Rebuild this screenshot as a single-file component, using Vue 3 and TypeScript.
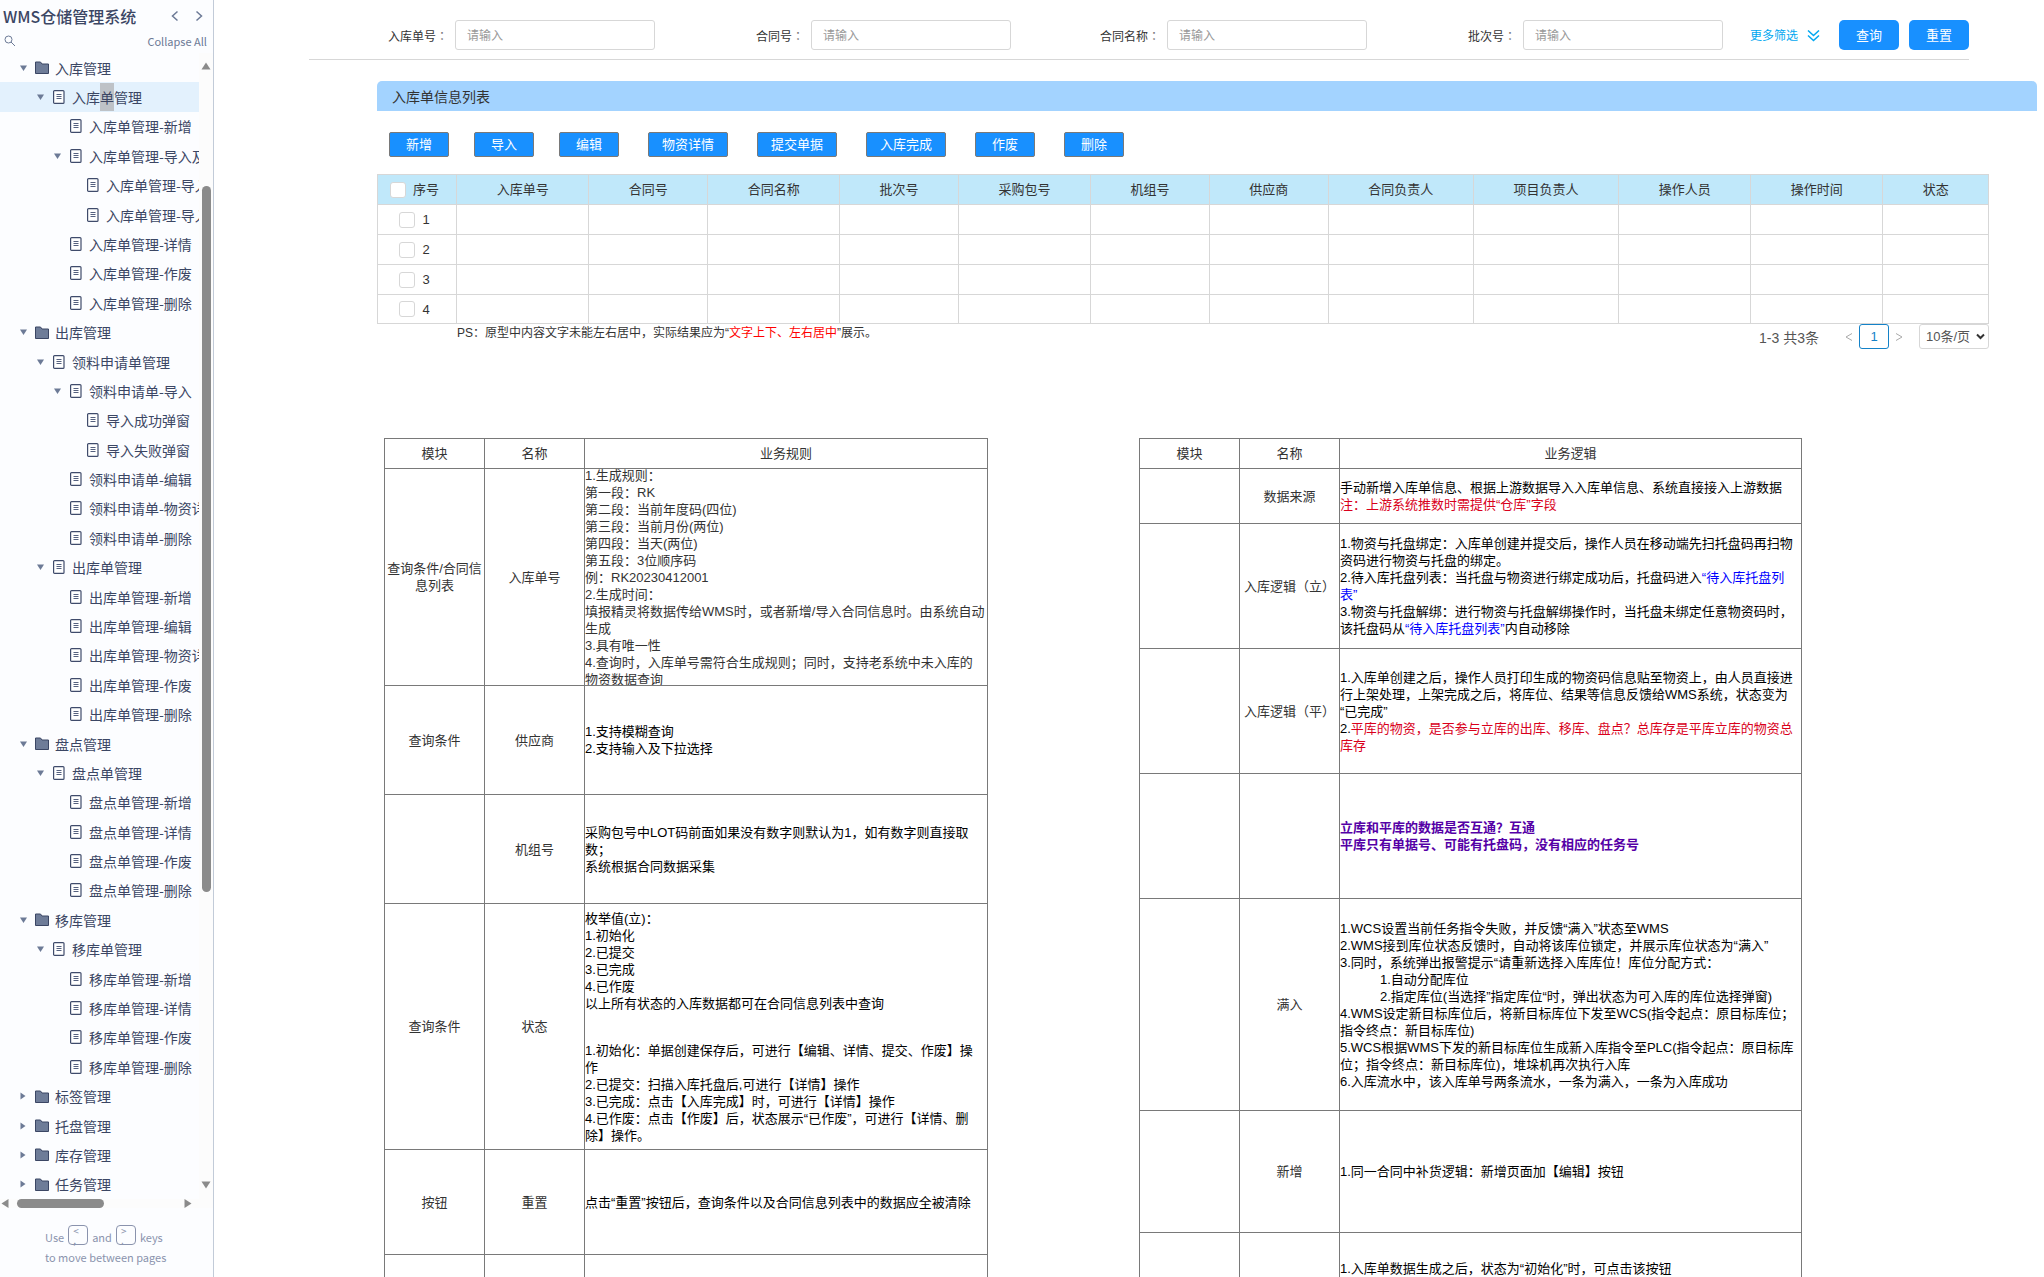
<script setup lang="ts">
import { ref } from 'vue'

interface TreeNode {
  label: string
  level: number
  open?: boolean
  folder?: boolean
}

interface Run {
  text: string
  tone?: 'red' | 'blue' | 'violet'
}

interface Para {
  runs: Run[]
  indent?: boolean
  gapBefore?: boolean
}

interface RuleRow {
  module: string
  name: string
  height: number
  paras: Para[]
  soft?: boolean
}

const p = (text: string, tone?: Run['tone']): Para => ({ runs: [{ text, tone }] })

const tree: TreeNode[] = [
  { label: '入库管理', level: 0, open: true, folder: true },
  { label: '入库单管理', level: 1, open: true },
  { label: '入库单管理-新增', level: 2 },
  { label: '入库单管理-导入及', level: 2, open: true },
  { label: '入库单管理-导入', level: 3 },
  { label: '入库单管理-导入', level: 3 },
  { label: '入库单管理-详情', level: 2 },
  { label: '入库单管理-作废', level: 2 },
  { label: '入库单管理-删除', level: 2 },
  { label: '出库管理', level: 0, open: true, folder: true },
  { label: '领料申请单管理', level: 1, open: true },
  { label: '领料申请单-导入', level: 2, open: true },
  { label: '导入成功弹窗', level: 3 },
  { label: '导入失败弹窗', level: 3 },
  { label: '领料申请单-编辑', level: 2 },
  { label: '领料申请单-物资详', level: 2 },
  { label: '领料申请单-删除', level: 2 },
  { label: '出库单管理', level: 1, open: true },
  { label: '出库单管理-新增', level: 2 },
  { label: '出库单管理-编辑', level: 2 },
  { label: '出库单管理-物资详', level: 2 },
  { label: '出库单管理-作废', level: 2 },
  { label: '出库单管理-删除', level: 2 },
  { label: '盘点管理', level: 0, open: true, folder: true },
  { label: '盘点单管理', level: 1, open: true },
  { label: '盘点单管理-新增', level: 2 },
  { label: '盘点单管理-详情', level: 2 },
  { label: '盘点单管理-作废', level: 2 },
  { label: '盘点单管理-删除', level: 2 },
  { label: '移库管理', level: 0, open: true, folder: true },
  { label: '移库单管理', level: 1, open: true },
  { label: '移库单管理-新增', level: 2 },
  { label: '移库单管理-详情', level: 2 },
  { label: '移库单管理-作废', level: 2 },
  { label: '移库单管理-删除', level: 2 },
  { label: '标签管理', level: 0, open: false, folder: true },
  { label: '托盘管理', level: 0, open: false, folder: true },
  { label: '库存管理', level: 0, open: false, folder: true },
  { label: '任务管理', level: 0, open: false, folder: true },
]
const current = 1

const filters = ['入库单号', '合同号', '合同名称', '批次号']
const actions = ['新增', '导入', '编辑', '物资详情', '提交单据', '入库完成', '作废', '删除']

const columns = [
  { title: '入库单号', units: 100 },
  { title: '合同号', units: 90 },
  { title: '合同名称', units: 100 },
  { title: '批次号', units: 90 },
  { title: '采购包号', units: 100 },
  { title: '机组号', units: 90 },
  { title: '供应商', units: 90 },
  { title: '合同负责人', units: 110 },
  { title: '项目负责人', units: 110 },
  { title: '操作人员', units: 100 },
  { title: '操作时间', units: 100 },
  { title: '状态', units: 80 },
]
const indexUnits = 60
const totalUnits = columns.reduce((sum, c) => sum + c.units, indexUnits)
const share = (units: number) => `${(units / totalUnits) * 100}%`

const pageSize = ref('10')

const rules: RuleRow[] = [
  {
    module: '查询条件/合同信息列表',
    name: '入库单号',
    height: 216,
    soft: true,
    paras: [
      p('1.生成规则：'),
      p('第一段：RK'),
      p('第二段：当前年度码(四位)'),
      p('第三段：当前月份(两位)'),
      p('第四段：当天(两位)'),
      p('第五段：3位顺序码'),
      p('例：RK20230412001'),
      p('2.生成时间：'),
      p('填报精灵将数据传给WMS时，或者新增/导入合同信息时。由系统自动生成'),
      p('3.具有唯一性'),
      p('4.查询时，入库单号需符合生成规则；同时，支持老系统中未入库的物资数据查询'),
    ],
  },
  {
    module: '查询条件',
    name: '供应商',
    height: 108,
    paras: [p('1.支持模糊查询'), p('2.支持输入及下拉选择')],
  },
  {
    module: '',
    name: '机组号',
    height: 108,
    paras: [
      p('采购包号中LOT码前面如果没有数字则默认为1，如有数字则直接取数；'),
      p('系统根据合同数据采集'),
    ],
  },
  {
    module: '查询条件',
    name: '状态',
    height: 245,
    paras: [
      p('枚举值(立)：'),
      p('1.初始化'),
      p('2.已提交'),
      p('3.已完成'),
      p('4.已作废'),
      p('以上所有状态的入库数据都可在合同信息列表中查询'),
      { runs: [{ text: '1.初始化：单据创建保存后，可进行【编辑、详情、提交、作废】操作' }], gapBefore: true },
      p('2.已提交：扫描入库托盘后,可进行【详情】操作'),
      p('3.已完成：点击【入库完成】时，可进行【详情】操作'),
      p('4.已作废：点击【作废】后，状态展示“已作废”，可进行【详情、删除】操作。'),
    ],
  },
  {
    module: '按钮',
    name: '重置',
    height: 104,
    paras: [p('点击“重置”按钮后，查询条件以及合同信息列表中的数据应全被清除')],
  },
  { module: '', name: '', height: 72, paras: [] },
]

const logic: RuleRow[] = [
  {
    module: '',
    name: '数据来源',
    height: 54,
    paras: [
      p('手动新增入库单信息、根据上游数据导入入库单信息、系统直接接入上游数据'),
      p('注：上游系统推数时需提供“仓库”字段', 'red'),
    ],
  },
  {
    module: '',
    name: '入库逻辑（立）',
    height: 124,
    paras: [
      p('1.物资与托盘绑定：入库单创建并提交后，操作人员在移动端先扫托盘码再扫物资码进行物资与托盘的绑定。'),
      {
        runs: [
          { text: '2.待入库托盘列表：当托盘与物资进行绑定成功后，托盘码进入' },
          { text: '“待入库托盘列表”', tone: 'blue' },
        ],
      },
      {
        runs: [
          { text: '3.物资与托盘解绑：进行物资与托盘解绑操作时，当托盘未绑定任意物资码时，该托盘码从' },
          { text: '“待入库托盘列表”', tone: 'blue' },
          { text: '内自动移除' },
        ],
      },
    ],
  },
  {
    module: '',
    name: '入库逻辑（平）',
    height: 124,
    paras: [
      p('1.入库单创建之后，操作人员打印生成的物资码信息贴至物资上，由人员直接进行上架处理，上架完成之后，将库位、结果等信息反馈给WMS系统，状态变为\u200b“已完成”'),
      {
        runs: [
          { text: '2.' },
          { text: '平库的物资，是否参与立库的出库、移库、盘点？总库存是平库立库的物资总库存', tone: 'red' },
        ],
      },
    ],
  },
  {
    module: '',
    name: '',
    height: 124,
    paras: [
      p('立库和平库的数据是否互通？互通', 'violet'),
      p('平库只有单据号、可能有托盘码，没有相应的任务号', 'violet'),
    ],
  },
  {
    module: '',
    name: '满入',
    height: 211,
    paras: [
      p('1.WCS设置当前任务指令失败，并反馈“满入”状态至WMS'),
      p('2.WMS接到库位状态反馈时，自动将该库位锁定，并展示库位状态为“满入”'),
      p('3.同时，系统弹出报警提示“请重新选择入库库位！库位分配方式：'),
      { runs: [{ text: '1.自动分配库位' }], indent: true },
      { runs: [{ text: '2.指定库位(当选择”指定库位“时，弹出状态为可入库的库位选择弹窗)' }], indent: true },
      p('4.WMS设定新目标库位后，将新目标库位下发至WCS(指令起点：原目标库位；指令终点：新目标库位)'),
      p('5.WCS根据WMS下发的新目标库位生成新入库指令至PLC(指令起点：原目标库位；指令终点：新目标库位)，堆垛机再次执行入库'),
      p('6.入库流水中，该入库单号两条流水，一条为满入，一条为入库成功'),
    ],
  },
  { module: '', name: '新增', height: 121, paras: [p('1.同一合同中补货逻辑：新增页面加【编辑】按钮')] },
  { module: '', name: '', height: 70, paras: [p('1.入库单数据生成之后，状态为“初始化”时，可点击该按钮')] },
]

const specs = [
  { key: 'rules', heading: '业务规则', rows: rules },
  { key: 'logic', heading: '业务逻辑', rows: logic },
]
</script>

<template>
  <div class="app">
    <aside class="sidebar">
      <header class="side-head">
        <div class="side-title">
          <h1>WMS仓储管理系统</h1>
          <button class="plain" type="button" aria-label="Previous page">
            <svg width="8" height="12" viewBox="0 0 8 12"><path d="M6.500 1.500 1.500 6l5 4.500" /></svg>
          </button>
          <button class="plain" type="button" aria-label="Next page">
            <svg width="8" height="12" viewBox="0 0 8 12"><path d="M1.500 1.500 6.500 6l-5 4.500" /></svg>
          </button>
        </div>
        <div class="side-tools">
          <button class="plain" type="button" aria-label="Search">
            <svg width="12" height="12" viewBox="0 0 12 12"><circle cx="4.500" cy="4.500" r="3.500" /><path d="m7 7 4 4" /></svg>
          </button>
          <button class="plain collapse" type="button">Collapse All</button>
        </div>
      </header>

      <div class="side-body">
        <ul class="tree">
          <li
            v-for="(node, i) in tree"
            :key="i"
            :class="['node', 'level-' + node.level, { current: i === current }]"
          >
            <span class="caret">
              <svg v-if="node.open === true" width="7" height="6" viewBox="0 0 7 6"><path d="M0 0.500h7L3.500 6z" /></svg>
              <svg v-else-if="node.open === false" width="6" height="8" viewBox="0 0 6 8"><path d="M0.500 0.500v7L5.500 4z" /></svg>
            </span>
            <svg v-if="node.folder" class="folder" width="14" height="13" viewBox="0 0 14 13">
              <path d="M0.500 1h5l1.500 2h6.500v9.500h-13z" />
            </svg>
            <svg v-else class="sheet" width="12" height="14" viewBox="0 0 12 14">
              <rect x="0.600" y="0.600" width="10.400" height="12.800" rx="1" />
              <path d="M3.500 4.500h5M3.500 6.500h5M3.500 8.500h5" />
            </svg>
            <a v-if="i === current" href="#">入库<span class="picked">单</span>管理</a>
            <a v-else href="#">{{ node.label }}</a>
          </li>
        </ul>
        <div class="vbar">
          <svg width="10" height="8" viewBox="0 0 10 8"><path d="M5 0.500 9.500 7.500h-9z" /></svg>
          <div class="vtrack"><i class="vthumb"></i></div>
          <svg width="10" height="8" viewBox="0 0 10 8"><path d="M5 7.500 0.500 0.500h9z" /></svg>
        </div>
      </div>
      <div class="hbar">
        <svg width="8" height="9" viewBox="0 0 8 9"><path d="M0.500 4.500 7.500 0v9z" /></svg>
        <div class="htrack"><i class="hthumb"></i></div>
        <svg width="8" height="9" viewBox="0 0 8 9"><path d="M7.500 4.500 0.500 0v9z" /></svg>
      </div>

      <footer class="side-foot">
        <div class="keys">
          <span>Use</span><kbd><span>&lt;</span><span>,</span></kbd>
          <span>and</span><kbd><span>&gt;</span><span>.</span></kbd>
          <span>keys</span>
        </div>
        <div>to move between pages</div>
      </footer>
    </aside>

    <main class="main">
      <form class="filters" @submit.prevent>
        <div v-for="(f, i) in filters" :key="f" class="field">
          <label :for="'filter-' + i">{{ f }}<span class="colon">：</span></label>
          <input :id="'filter-' + i" type="text" placeholder="请输入" />
        </div>
        <div class="filter-actions">
          <a class="more" href="#">
            更多筛选
            <svg width="13" height="12" viewBox="0 0 13 12"><path d="M1 0.500 6.500 5.500 12 0.500M1 5.500 6.500 10.500 12 5.500" /></svg>
          </a>
          <button class="primary" type="submit">查询</button>
          <button class="primary" type="reset">重置</button>
        </div>
      </form>

      <section class="list">
        <h2 class="list-title">入库单信息列表</h2>
        <div class="actions">
          <button v-for="a in actions" :key="a" type="button" :class="{ wide: a.length > 2 }">{{ a }}</button>
        </div>
        <table class="grid">
          <colgroup>
            <col :style="{ width: share(indexUnits) }" />
            <col v-for="c in columns" :key="c.title" :style="{ width: share(c.units) }" />
          </colgroup>
          <thead>
            <tr>
              <th><label class="pick"><input type="checkbox" />序号</label></th>
              <th v-for="c in columns" :key="c.title">{{ c.title }}</th>
            </tr>
          </thead>
          <tbody>
            <tr v-for="n in 4" :key="n">
              <td><label class="pick"><input type="checkbox" />{{ n }}</label></td>
              <td v-for="c in columns" :key="c.title"></td>
            </tr>
          </tbody>
        </table>
        <div class="list-foot">
          <p class="note">PS：原型中内容文字未能左右居中，实际结果应为“<em>文字上下、左右居中</em>”展示。</p>
          <nav class="pager">
            <span class="total">1-3 共3条</span>
            <button class="arrow" type="button" aria-label="上一页">
              <svg width="8" height="8" viewBox="0 0 8 8"><path d="M7 0.500 1 4l6 3.500" /></svg>
            </button>
            <button class="page" type="button">1</button>
            <button class="arrow" type="button" aria-label="下一页">
              <svg width="8" height="8" viewBox="0 0 8 8"><path d="M1 0.500 7 4 1 7.500" /></svg>
            </button>
            <span class="size">
              <select v-model="pageSize" aria-label="每页条数">
                <option value="10">10条/页</option>
              </select>
              <svg width="9" height="7" viewBox="0 0 9 7"><path d="M1 1.500l3.500 3.500L8 1.500" /></svg>
            </span>
          </nav>
        </div>
      </section>

      <section class="specs">
        <table v-for="s in specs" :key="s.key" :class="['spec', s.key]">
          <thead>
            <tr>
              <th class="narrow">模块</th>
              <th class="narrow">名称</th>
              <th>{{ s.heading }}</th>
            </tr>
          </thead>
          <tbody>
            <tr v-for="(row, i) in s.rows" :key="i">
              <td class="tag">{{ row.module }}</td>
              <td class="tag">{{ row.name }}</td>
              <td>
                <div :class="['body', { soft: row.soft }]" :style="{ height: row.height + 'px' }">
                  <p v-for="(para, j) in row.paras" :key="j" :class="{ indent: para.indent, gap: para.gapBefore }">
                    <span v-for="(run, k) in para.runs" :key="k" :class="run.tone">{{ run.text }}</span>
                  </p>
                </div>
              </td>
            </tr>
          </tbody>
        </table>
      </section>
    </main>
  </div>
</template>

<style>
html,
body {
  height: 100%;
  overflow: hidden;
}
</style>

<style scoped>
.app {
  display: flex;
  height: 100vh;
  overflow: hidden;
  background: #fff;
  color: #333;
  font-family: "Liberation Sans", "Noto Sans CJK SC", sans-serif;
  font-size: 13px;
  line-height: 17px;
  text-spacing-trim: space-all;
}
.app * {
  box-sizing: border-box;
}
h1,
h2,
p,
ul {
  margin: 0;
  padding: 0;
}
a {
  color: inherit;
  text-decoration: none;
}
button,
input,
select {
  font: inherit;
}
svg {
  flex: none;
}

/* sidebar */
.sidebar {
  display: flex;
  flex: none;
  flex-direction: column;
  width: 214px;
  border-right: 1px solid #c2cbd8;
  background: #fcfdff;
  color: #3b4664;
  font-family: "Noto Sans CJK SC", sans-serif;
}
.side-head {
  flex: none;
  height: 53px;
}
.side-title {
  display: flex;
  align-items: center;
  height: 32px;
  padding: 0 10px 0 3px;
}
.side-title h1 {
  flex: 1;
  font-size: 16px;
  font-weight: 500;
  line-height: 24px;
  white-space: nowrap;
}
.plain {
  padding: 0;
  border: 0;
  background: none;
  color: #6c7a96;
}
.plain svg {
  display: block;
  fill: none;
  stroke: #6c7a96;
  stroke-width: 1.5;
}
.side-title .plain + .plain {
  margin-left: 16px;
}
.side-tools {
  display: flex;
  align-items: center;
  justify-content: space-between;
  height: 18px;
  padding: 0 6px 0 4px;
}
.side-tools svg {
  stroke-width: 1;
}
.collapse {
  font-size: 11px;
  line-height: 18px;
}
.side-body {
  display: flex;
  flex: 1;
  min-height: 0;
}
.tree {
  display: grid;
  flex: 1;
  grid-auto-rows: minmax(0, 1fr);
  min-width: 0;
  overflow: hidden;
  list-style: none;
  font-size: 14px;
}
.node {
  display: flex;
  align-items: center;
  min-width: 0;
  overflow: hidden;
  white-space: nowrap;
}
.node.current {
  background: #e3f1fd;
}
.level-0 { padding-left: 19px; }
.level-1 { padding-left: 36px; }
.level-2 { padding-left: 53px; }
.level-3 { padding-left: 70px; }
.caret {
  display: flex;
  flex: none;
  align-items: center;
  justify-content: center;
  width: 8px;
  margin-right: 8px;
}
.caret svg {
  fill: #6c7a96;
}
.folder {
  margin-right: 6px;
  fill: #6e7c98;
  stroke: #3b4664;
}
.sheet {
  margin: 0 7px 0 1px;
  fill: #fff;
  stroke: #3f4b6b;
  stroke-width: 1.2;
}
.sheet path {
  stroke: #55617f;
}
.node a {
  line-height: 28px;
}
.picked {
  display: inline-block;
  background: #bec2c7;
}
.vbar {
  display: flex;
  flex: none;
  flex-direction: column;
  align-items: center;
  width: 14px;
  padding: 9px 0 10px;
  background: #fcfcfc;
}
.vbar svg,
.hbar svg {
  fill: #8b8b8b;
}
.vtrack {
  display: flex;
  flex: 1;
  flex-direction: column;
  width: 9px;
  padding: 116px 0 289px;
}
.vthumb {
  flex: 1;
  border-radius: 5px;
  background: #8b8b8b;
}
.hbar {
  display: flex;
  flex: none;
  align-items: center;
  height: 9px;
  padding: 0 21px 0 1px;
  background: #fcfcfc;
}
.htrack {
  display: flex;
  flex: 1;
  padding: 0 80px 0 8px;
}
.hthumb {
  flex: 1;
  height: 9px;
  border-radius: 5px;
  background: #8b8b8b;
}
.side-foot {
  flex: none;
  height: 69px;
  padding: 17px 0 0 45px;
  color: #8a93ad;
  font-size: 11px;
  line-height: 20px;
}
.keys {
  display: flex;
  gap: 4px;
  height: 22px;
}
kbd {
  display: flex;
  flex-direction: column;
  width: 20px;
  height: 20px;
  padding-left: 4px;
  border: 1px solid #8a93ad;
  border-radius: 4px;
  font-family: inherit;
  font-size: 10px;
  line-height: 9px;
}
.keys > span {
  line-height: 24px;
}

/* filter bar */
.main {
  flex: 1;
  min-width: 0;
}
.filters {
  display: flex;
  align-items: center;
  justify-content: space-between;
  height: 60px;
  margin: 0 75px 0 95px;
  padding: 20px 0 9px 79px;
  border-bottom: 1px solid #d7d7d7;
  font-size: 12px;
}
.field {
  display: flex;
  flex: 0 1 356px;
  align-items: center;
}
.field label {
  width: 60px;
  margin-right: 7px;
  padding-top: 2px;
  text-align: right;
  white-space: nowrap;
}
.colon {
  color: #777;
  font-family: "Noto Sans CJK JP", sans-serif;
}
.field input {
  width: 200px;
  min-width: 0;
  height: 30px;
  padding: 2px 11px 0;
  border: 1px solid #d7d7d7;
  border-radius: 3px;
  background: #fff;
  color: #333;
}
.field input::placeholder {
  color: #999;
}
.field:nth-child(4) {
  flex-basis: 267px;
}
.filter-actions {
  display: flex;
  flex: none;
  align-items: center;
  gap: 10px;
  margin-left: 27px;
}
.more {
  display: flex;
  align-items: center;
  gap: 9px;
  margin-right: 9px;
  padding-top: 2px;
  color: #02a7f0;
}
.more svg {
  fill: none;
  stroke: #02a7f0;
  stroke-width: 1.5;
}
.primary {
  width: 60px;
  height: 30px;
  padding: 1px 0 0;
  border: 0;
  border-radius: 5px;
  background: #1890ff;
  color: #fff;
  font-size: 13px;
}

/* inbound list */
.list {
  margin: 21px 7px 0 163px;
}
.list-title {
  height: 30px;
  padding-left: 15px;
  border-radius: 5px 5px 0 0;
  background: #a3d3ff;
  font-size: 14px;
  font-weight: 400;
  line-height: 32px;
}
.actions {
  display: flex;
  gap: 25px;
  padding: 21px 0 17px 12px;
}
.actions button {
  width: 60px;
  height: 25px;
  padding: 0;
  border: 1px solid #797979;
  border-radius: 2px;
  background: #1890ff;
  color: #fff;
}
.actions .wide {
  width: 80px;
}
.actions .wide,
.actions .wide ~ button {
  margin-left: 4px;
}
.grid,
.spec {
  border-collapse: collapse;
  table-layout: fixed;
}
.grid {
  width: calc(100% - 48px);
}
.grid th,
.grid td {
  height: 30px;
  padding: 0;
  border: 1px solid #d7d7d7;
  font-weight: 400;
  text-align: center;
}
.grid tr:last-child td {
  height: 29px;
}
.grid th {
  background: #c0e8fa;
}
.pick {
  display: flex;
  align-items: center;
  justify-content: center;
  gap: 7px;
  padding-right: 5px;
}
.pick input {
  width: 16px;
  height: 16px;
  margin: 0;
  appearance: none;
  border: 1px solid #d7d7d7;
  border-radius: 3px;
  background: #fff;
}
.list-foot {
  display: flex;
  justify-content: space-between;
  padding: 0 48px 0 80px;
}
.note {
  padding-top: 1px;
  font-size: 12px;
}
.note em {
  color: #f00;
  font-style: normal;
}
.pager {
  display: flex;
  align-items: center;
  height: 25px;
}
.total {
  margin-right: 26px;
  padding-top: 4px;
  color: #555;
  font-size: 14px;
}
.arrow {
  display: flex;
  padding: 0;
  border: 0;
  background: none;
}
.arrow svg,
.size svg {
  fill: none;
  stroke: #aaa;
}
.page {
  width: 30px;
  height: 25px;
  margin: 0 6px;
  padding: 0;
  border: 1px solid #1482c8;
  border-radius: 3px;
  background: #fff;
  color: #1482c8;
}
.size {
  position: relative;
  margin-left: 16px;
}
.size select {
  display: block;
  width: 70px;
  height: 25px;
  padding: 0 0 0 6px;
  appearance: none;
  border: 1px solid #d7d7d7;
  border-radius: 3px;
  background: #fff;
  color: #555;
}
.size svg {
  position: absolute;
  top: 9px;
  right: 4px;
  stroke: #333;
  stroke-width: 2;
  pointer-events: none;
}

/* specification tables */
.specs {
  display: flex;
  align-items: flex-start;
  gap: 151px;
  margin: 89px 7px 0 170px;
}
.spec.rules {
  width: 604px;
}
.spec.logic {
  width: 663px;
}
.spec th,
.spec td {
  padding: 0;
  border: 1px solid #797979;
  font-weight: 400;
}
.spec th {
  height: 30px;
}
.narrow {
  width: 100px;
}
.tag {
  text-align: center;
}
.body {
  display: flex;
  flex-direction: column;
  justify-content: center;
  padding-right: 2px;
  overflow: hidden;
  color: #000;
}
.body.soft {
  color: #333;
}
.body p {
  flex: none;
}
.indent {
  padding-left: 40px;
}
.gap {
  margin-top: 30px;
}
.red {
  color: #d9001b;
}
.blue {
  color: #00f;
}
.violet {
  color: #5500a6;
  font-weight: 700;
}
</style>
